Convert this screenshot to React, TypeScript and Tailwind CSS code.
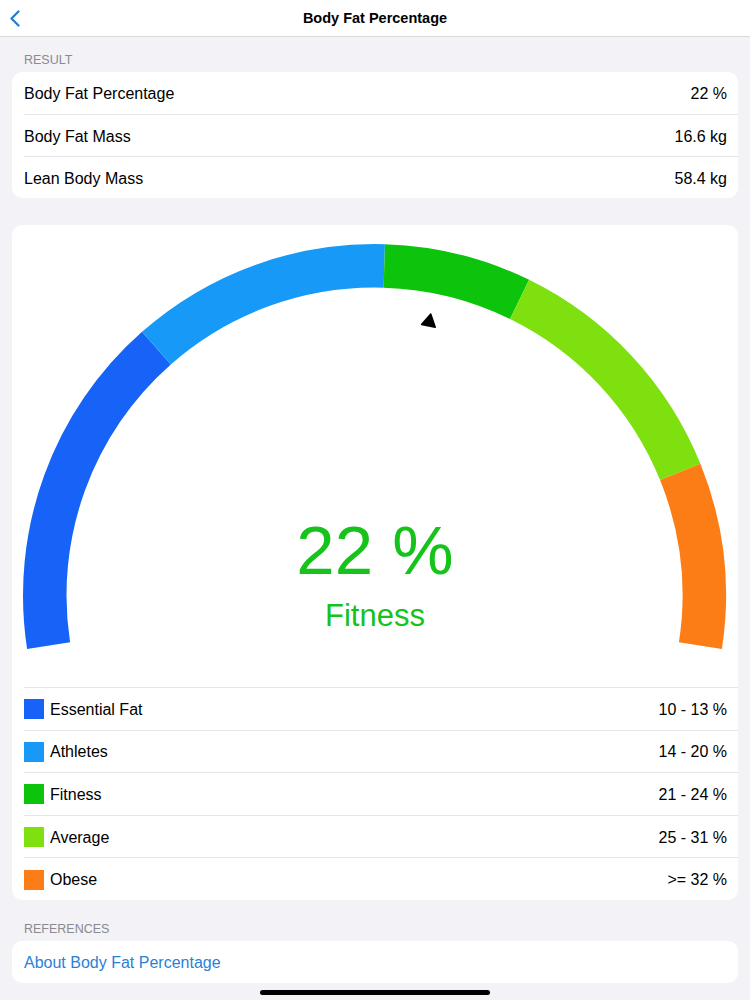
import React from 'react';

const CX = 362.5;
const CY = 370.5;
const R_OUT = 351.5;
const R_IN = 308;

// gauge bands, angles in degrees (0 = right, 90 = top)
const bands = [
  { from: 188.75, to: 131.4, color: '#1763f7' },
  { from: 131.4, to: 88.3, color: '#1799f8' },
  { from: 88.3, to: 63.9, color: '#0bc40b' },
  { from: 63.9, to: 22.0, color: '#7ee00e' },
  { from: 22.0, to: -8.75, color: '#fc7d15' },
];

const legend = [
  { name: 'Essential Fat', range: '10 - 13 %', swatch: 'bg-[#1763f7]' },
  { name: 'Athletes', range: '14 - 20 %', swatch: 'bg-[#1799f8]' },
  { name: 'Fitness', range: '21 - 24 %', swatch: 'bg-[#0bc40b]' },
  { name: 'Average', range: '25 - 31 %', swatch: 'bg-[#7ee00e]' },
  { name: 'Obese', range: '>= 32 %', swatch: 'bg-[#fc7d15]' },
];

const results = [
  { label: 'Body Fat Percentage', value: '22 %' },
  { label: 'Body Fat Mass', value: '16.6 kg' },
  { label: 'Lean Body Mass', value: '58.4 kg' },
];

function pt(r: number, deg: number) {
  const a = (deg * Math.PI) / 180;
  return `${(CX + r * Math.cos(a)).toFixed(2)} ${(CY - r * Math.sin(a)).toFixed(2)}`;
}

function sector(from: number, to: number) {
  const large = from - to > 180 ? 1 : 0;
  return [
    `M ${pt(R_OUT, from)}`,
    `A ${R_OUT} ${R_OUT} 0 ${large} 1 ${pt(R_OUT, to)}`,
    `L ${pt(R_IN, to)}`,
    `A ${R_IN} ${R_IN} 0 ${large} 0 ${pt(R_IN, from)}`,
    'Z',
  ].join(' ');
}

function Gauge() {
  const pointerAngle = 78.7;
  return (
    <div className="relative h-[462px]">
      <svg className="absolute inset-0" width="726" height="462" viewBox="0 0 726 462">
        {bands.map((b) => (
          <path key={b.color} d={sector(b.from, b.to)} fill={b.color} />
        ))}
        <g transform={`translate(${CX} ${CY}) rotate(${90 - pointerAngle})`}>
          <path d="M 0 -287 L 7 -275 L -7 -275 Z" fill="#000" strokeLinejoin="round" stroke="#000" strokeWidth="1.5" />
        </g>
      </svg>
      <div className="absolute left-0 right-0 top-[291px] flex flex-col items-center text-[#15c31b]">
        <div className="text-[69px] leading-[70px]">22 %</div>
        <div className="mt-[14px] text-[31px] leading-[31px]">Fitness</div>
      </div>
    </div>
  );
}

export default function App() {
  return (
    <div className="min-h-screen bg-[#f2f2f7] font-['Liberation_Sans',Arial,sans-serif] text-black">
      {/* Nav bar */}
      <div className="relative flex h-[37px] items-center justify-center border-b border-[#d9d9de] bg-white pt-px">
        <svg className="absolute left-[8px] top-[10px]" width="14" height="17" viewBox="0 0 14 17">
          <path d="M10.5 1.5 L3.5 8.5 L10.5 15.5" fill="none" stroke="#1e7ad6" strokeWidth="2.2" strokeLinecap="round" strokeLinejoin="round" />
        </svg>
        <span className="text-[14.5px] font-bold">Body Fat Percentage</span>
      </div>

      {/* Result */}
      <div className="flex h-[35px] items-end px-6 pb-[4px] text-[12.5px] leading-[15px] text-[#8a8a8e]">RESULT</div>
      <div className="mx-3 overflow-hidden rounded-[10px] bg-white">
        {results.map((r, i) => (
          <div key={r.label} className="pl-3">
            <div
              className={`flex h-[42px] items-center justify-between pr-[11px] pt-[2px] text-[16px] ${
                i > 0 ? 'border-t border-[#e5e5ea]' : ''
              }`}
            >
              <span>{r.label}</span>
              <span>{r.value}</span>
            </div>
          </div>
        ))}
      </div>

      {/* Gauge card */}
      <div className="mx-3 mt-[27px] overflow-hidden rounded-[10px] bg-white">
        <Gauge />
        {legend.map((l) => (
          <div key={l.name} className="pl-3">
            <div className="flex h-[42.6px] items-center justify-between border-t border-[#e5e5ea] pr-[11px] pt-px text-[16px]">
              <div className="flex items-center gap-[6px]">
                <span className={`h-5 w-5 ${l.swatch}`} />
                <span className="pt-px">{l.name}</span>
              </div>
              <span className="pt-px">{l.range}</span>
            </div>
          </div>
        ))}
      </div>

      {/* References */}
      <div className="flex h-[41px] items-end px-6 pb-[4px] text-[12.5px] leading-[15px] text-[#8a8a8e]">REFERENCES</div>
      <div className="mx-3 flex h-[42px] items-center rounded-[10px] bg-white px-3 pt-[2px] text-[16px] text-[#2b7fd6]">
        About Body Fat Percentage
      </div>

      <div className="flex justify-center pt-[7px]">
        <div className="h-[5px] w-[230px] rounded-full bg-black" />
      </div>
    </div>
  );
}
